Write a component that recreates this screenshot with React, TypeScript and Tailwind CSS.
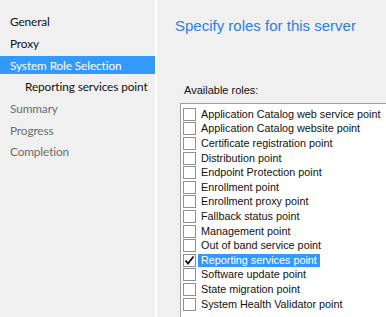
import React from 'react';

const navItems = [
  { label: 'General', state: 'done' },
  { label: 'Proxy', state: 'done' },
  { label: 'System Role Selection', state: 'active' },
  { label: 'Reporting services point', state: 'sub' },
  { label: 'Summary', state: 'todo' },
  { label: 'Progress', state: 'todo' },
  { label: 'Completion', state: 'todo' },
];

const roles = [
  'Application Catalog web service point',
  'Application Catalog website point',
  'Certificate registration point',
  'Distribution point',
  'Endpoint Protection point',
  'Enrollment point',
  'Enrollment proxy point',
  'Fallback status point',
  'Management point',
  'Out of band service point',
  'Reporting services point',
  'Software update point',
  'State migration point',
  'System Health Validator point',
];

const Check = () => (
  <svg width="11" height="11" viewBox="0 0 11 11" className="absolute left-[0px] top-[0px]">
    <path d="M1.5 5.5 L4 8.5 L9.5 1.5" fill="none" stroke="#111" strokeWidth="1.8" />
  </svg>
);

export default function App() {
  return (
    <div className="w-[386px] h-[317px] flex bg-[#f0f0f0] overflow-hidden">
      {/* wizard steps */}
      <div className="w-[155px] shrink-0 pt-[13px] flex flex-col gap-[3.7px] text-[11.8px] tracking-[-0.1px] font-['Lato',sans-serif]">
        {navItems.map((item) => (
          <div
            key={item.label}
            className={
              'h-[18px] flex items-center whitespace-nowrap ' +
              (item.state === 'active'
                ? 'bg-[#3399ff] text-white pl-[10px]'
                : item.state === 'sub'
                ? 'text-[#111] pl-[25px]'
                : item.state === 'done'
                ? 'text-[#111] pl-[10px]'
                : 'text-[#6d6d6d] pl-[10px]')
            }
          >
            {item.label}
          </div>
        ))}
      </div>
      <div className="w-[2px] shrink-0 bg-white" />

      {/* page */}
      <div className="flex-1 min-w-0 pl-[18px] pt-[17px] font-['Liberation_Sans',Arial,sans-serif]">
        <div className="text-[15px] leading-[18px] text-[#2a7fe0] whitespace-nowrap">
          Specify roles for this server
        </div>
        <div className="mt-[49px] pl-[9px] text-[11px] leading-[13px] text-[#111]">Available roles:</div>
        <div className="mt-[6px] ml-[5px] w-[260px] h-[230px] bg-white border border-[#a0a0a0] pt-[3px] pl-[2px] text-[10.8px] text-[#111]">
          {roles.map((role, i) => {
            const checked = i === 10;
            return (
              <div key={role} className="h-[14.6px] flex items-center whitespace-nowrap">
                <span className="relative w-[13px] h-[13px] shrink-0 border border-[#8f8f8f] bg-white">
                  {checked && <Check />}
                </span>
                <span
                  className={
                    'ml-[2px] pl-[3px] pr-[3px] leading-[13px] ' +
                    (checked ? 'bg-[#3399ff] text-white' : '')
                  }
                >
                  {role}
                </span>
              </div>
            );
          })}
        </div>
      </div>
    </div>
  );
}
